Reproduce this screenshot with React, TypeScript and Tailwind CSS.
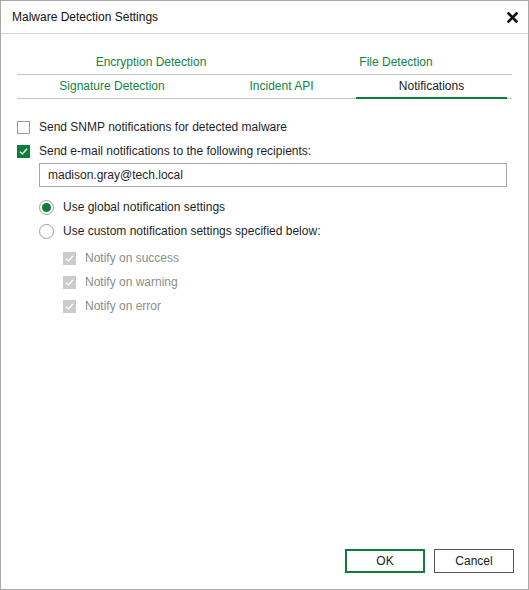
import React from 'react'

function CheckBox({ checked, disabled }: { checked?: boolean; disabled?: boolean }) {
  if (disabled) {
    return (
      <span className="flex h-[13px] w-[13px] items-center justify-center bg-[#cccccc]">
        <svg width="9" height="9" viewBox="0 0 9 9">
          <path d="M1 4.6 L3.4 7 L8 1.8" fill="none" stroke="#ffffff" strokeWidth="1.3" />
        </svg>
      </span>
    )
  }
  if (checked) {
    return (
      <span className="flex h-[13px] w-[13px] items-center justify-center bg-[#0e7c3a]">
        <svg width="9" height="9" viewBox="0 0 9 9">
          <path d="M1 4.6 L3.4 7 L8 1.8" fill="none" stroke="#ffffff" strokeWidth="1.3" />
        </svg>
      </span>
    )
  }
  return <span className="h-[13px] w-[13px] border border-[#9a9a9a] bg-white" />
}

function Radio({ selected }: { selected?: boolean }) {
  return (
    <span className="flex h-[15px] w-[15px] items-center justify-center rounded-full border border-[#a0a0a0] bg-white">
      {selected && <span className="h-[9px] w-[9px] rounded-full bg-[#0e7c3a]" />}
    </span>
  )
}

export default function App() {
  const font = { fontFamily: '"Liberation Sans", Arial, sans-serif' }
  return (
    <div
      className="flex h-[590px] w-[529px] flex-col border border-[#a9a9a9] bg-white text-[12px] text-[#1f1f1f]"
      style={font}
    >
      {/* Title bar */}
      <div className="flex h-[33px] shrink-0 items-center justify-between border-b border-[#d4d4d4] pl-[11px] pr-[10px]">
        <span className="text-[12px] text-[#111]">Malware Detection Settings</span>
        <svg width="11" height="11" viewBox="0 0 11 11">
          <path d="M1.5 1.5 L9.5 9.5 M9.5 1.5 L1.5 9.5" stroke="#111" strokeWidth="2.6" strokeLinecap="square" />
        </svg>
      </div>

      {/* Tabs */}
      <div className="mx-[16px] mt-[16px] text-[12px]">
        <div className="flex h-[25px] items-center border-b border-[#c6c6c6]">
          <div className="w-[268px] text-center text-[#11843f]">Encryption Detection</div>
          <div className="w-[222px] text-center text-[#11843f]">File Detection</div>
        </div>
        <div className="flex h-[24px] items-stretch border-b border-[#c6c6c6]">
          <div className="flex w-[190px] items-center justify-center pb-[2px] text-[#11843f]">Signature Detection</div>
          <div className="flex w-[149px] items-center justify-center pb-[2px] text-[#11843f]">Incident API</div>
          <div className="-mb-px flex w-[151px] items-center justify-center border-b-2 border-[#0e7c3a] pb-[1px] text-[#1a1a1a]">
            Notifications
          </div>
        </div>
      </div>

      {/* Content */}
      <div className="mt-[16px] flex flex-col pl-[16px] pr-[21px]">
        <label className="flex h-[24px] items-center gap-[9px]">
          <CheckBox />
          <span>Send SNMP notifications for detected malware</span>
        </label>
        <label className="flex h-[24px] items-center gap-[9px]">
          <CheckBox checked />
          <span>Send e-mail notifications to the following recipients:</span>
        </label>
        <div className="ml-[22px] flex h-[24px] items-center border border-[#a6a6a6] pl-[8px]">
          madison.gray@tech.local
        </div>

        <div className="ml-[22px] mt-[8px] flex flex-col">
          <label className="flex h-[24px] items-center gap-[9px]">
            <Radio selected />
            <span>Use global notification settings</span>
          </label>
          <label className="flex h-[24px] items-center gap-[9px]">
            <Radio />
            <span>Use custom notification settings specified below:</span>
          </label>
          <div className="ml-[24px] mt-[3px] flex flex-col text-[#8c8c8c]">
            {['Notify on success', 'Notify on warning', 'Notify on error'].map(t => (
              <label key={t} className="flex h-[24px] items-center gap-[9px]">
                <CheckBox disabled />
                <span>{t}</span>
              </label>
            ))}
          </div>
        </div>
      </div>

      <div className="flex-1" />

      {/* Buttons */}
      <div className="flex justify-end gap-[9px] pb-[16px] pr-[14px]">
        <button
          className="h-[24px] w-[80px] border-2 border-[#0e7c3a] bg-white text-[12px] text-[#1a1a1a]"
          style={font}
        >
          OK
        </button>
        <button
          className="h-[24px] w-[80px] border border-[#555] bg-white text-[12px] text-[#1a1a1a]"
          style={font}
        >
          Cancel
        </button>
      </div>
    </div>
  )
}
